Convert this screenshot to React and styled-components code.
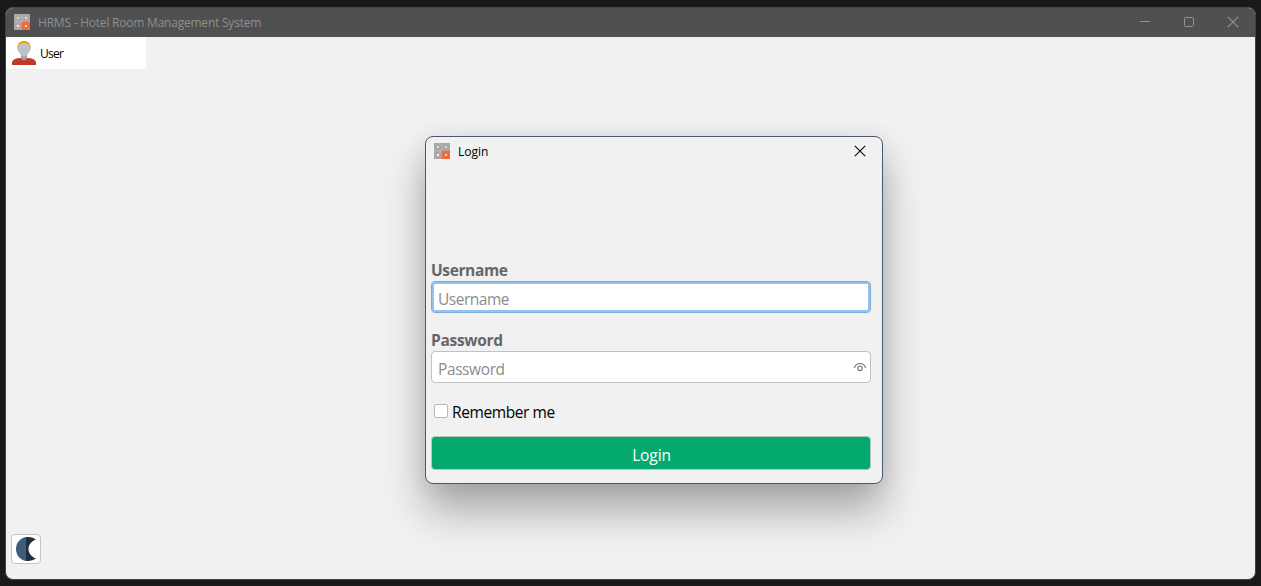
import React from "react";
import styled, { createGlobalStyle } from "styled-components";

const GlobalStyle = createGlobalStyle`
  * { box-sizing: border-box; }
  body { margin: 0; background: #191919; overflow: hidden; }
  body, input, button { font-family: "Open Sans", "Noto Sans", sans-serif; }
`;

const Desktop = styled.div`
  width: 1261px;
  height: 586px;
  padding: 7px 5px 6px;
  background: #191919;
`;

const Window = styled.main`
  position: relative;
  display: flex;
  flex-direction: column;
  width: 1251px;
  height: 573px;
  border: 1px solid #414243;
  border-top-color: #474849;
  border-radius: 8px;
  background: #f1f1f1;
  overflow: hidden;
`;

const TitleBar = styled.header`
  display: flex;
  align-items: center;
  height: 29px;
  flex: none;
  padding: 0 16px 1px 8px;
  background: #4f5051;
  color: #8f8f8f;
`;

const Caption = styled.span`
  margin-left: 8px;
  padding-top: 1px;
  font-size: 12px;
  line-height: 16px;
  letter-spacing: ${(p) => p.$spacing || "0"};
  white-space: nowrap;
`;

const WindowControls = styled.div`
  display: flex;
  gap: 32px;
  margin-left: auto;
  svg { display: block; }
`;

const UserTab = styled.div`
  display: flex;
  align-items: center;
  flex: none;
  gap: 4px;
  width: 140px;
  height: 32px;
  padding-left: 6px;
  background: #fff;
  color: #000;
  font-size: 12px;
  letter-spacing: -0.75px;
`;

const ThemeButton = styled.button`
  display: flex;
  align-items: center;
  justify-content: center;
  width: 30px;
  height: 30px;
  margin: auto 0 15px 5px;
  padding: 0;
  border: 1px solid #c4c4c4;
  border-radius: 4px;
  background: #fff;
`;

const Dialog = styled.section`
  position: absolute;
  left: 419px;
  top: 128px;
  width: 458px;
  height: 348px;
  border: 1px solid #4b5a6a;
  border-radius: 8px;
  background: #f1f1f1;
  box-shadow: 0 27px 42px rgba(0, 0, 0, 0.3), 0 2px 24px rgba(0, 0, 0, 0.08);
`;

const DialogHeader = styled.header`
  display: flex;
  align-items: center;
  height: 30px;
  padding: 0 16px 2px 8px;
  color: #000;
  > svg:last-child { margin-left: auto; }
`;

const Form = styled.div`
  display: flex;
  flex-direction: column;
  width: 440px;
  margin: 92px 0 0 5px;
`;

const FieldLabel = styled.label`
  height: 22px;
  color: #666;
  font-size: 15.5px;
  font-weight: 700;
  line-height: 22px;
  letter-spacing: ${(p) => p.$spacing};
`;

const Field = styled.div`
  display: flex;
  align-items: center;
  height: 32px;
  margin-bottom: 16px;
  padding-right: 3px;
  border: 1px solid ${(p) => (p.$focused ? "#7faad6" : "#c1c1c1")};
  border-radius: 4px;
  background: #fff;
  box-shadow: ${(p) => (p.$focused ? "inset 0 0 0 2px #96c3ee" : "none")};
`;

const TextInput = styled.input`
  flex: 1;
  min-width: 0;
  height: 28px;
  padding: 3px 0 0 6px;
  border: 0;
  outline: 0;
  background: transparent;
  font-size: 15.5px;
  letter-spacing: ${(p) => p.$spacing};
  &::placeholder { color: #8c8c8c; opacity: 1; }
`;

const Remember = styled.label`
  display: flex;
  align-items: center;
  gap: 4px;
  height: 22px;
  margin-top: 2px;
  padding-left: 3px;
  color: #000;
  font-size: 15.5px;
  line-height: 22px;
  letter-spacing: -0.4px;
`;

const Checkbox = styled.input`
  appearance: none;
  width: 14px;
  height: 14px;
  margin: 0 0 2px;
  border: 1px solid #b8b8b8;
  border-radius: 2px;
  background: #fff;
`;

const LoginButton = styled.button`
  height: 34px;
  margin-top: 13px;
  padding: 3px 0 0 1px;
  border: 1px solid #b6c9c1;
  border-radius: 4px;
  background: #04aa6d;
  color: #fff;
  font-size: 15.5px;
  line-height: 22px;
  letter-spacing: -0.1px;
`;

function AppIcon() {
  return (
    <svg width="16" height="16" viewBox="0 0 16 16">
      <path fill="#aaa7a5" d="M0 0h16v8H8v8H0z" />
      <path fill="#b9b6b4" d="M7.500 0h1v7.500h-1zM0 7.500h8v1H0z" />
      <path fill="#ee6c3b" d="M8 8h8v8H8z" />
      <g fill="#eee">
        <circle cx="4" cy="4" r="1" />
        <circle cx="12" cy="4" r="1" />
        <circle cx="4" cy="12" r="1.200" />
        <circle cx="12" cy="12" r="1" />
      </g>
    </svg>
  );
}

function UserIcon() {
  return (
    <svg width="24" height="24" viewBox="0 0 24 24">
      <path fill="#c0392b" d="M0 24v-2.200C0 19 3 17.500 7.500 17h9c4.500.5 7.500 2 7.500 4.800V24z" />
      <path fill="#95a5a6" d="M9 14h6v3.200c0 1.200-1.300 1.800-3 1.800s-3-.6-3-1.800z" />
      <path fill="#f39c12" d="M5.300 7C5.300 2.500 7.800 0 12 0s6.700 2.500 6.700 7z" />
      <path fill="#bdc3c7" d="M6.300 5C7.200 3 9 1.900 12 1.900S16.800 3 17.700 5l1 2c0 2.400-.9 3.700-1.900 4.300C16 13.800 14.200 15.500 12 15.500s-4-1.700-4.800-4.200c-1-.6-1.900-1.900-1.900-4.300z" />
    </svg>
  );
}

function CloseIcon({ color, size = 12 }) {
  return (
    <svg width={size} height={size} viewBox="0 0 12 12" fill="none" stroke={color} strokeWidth="1.2">
      <path d="m.8.8 10.400 10.400M11.200.8.8 11.200" />
    </svg>
  );
}

export default function App() {
  return (
    <>
      <GlobalStyle />
      <Desktop>
        <Window>
          <TitleBar>
            <AppIcon />
            <Caption $spacing="-0.22px">HRMS - Hotel Room Management System</Caption>
            <WindowControls>
              <svg width="12" height="12" viewBox="0 0 12 12" stroke="#929292">
                <path d="M1 5.500h10" />
              </svg>
              <svg width="12" height="12" viewBox="0 0 12 12" fill="none" stroke="#929292">
                <rect x="1.500" y="1.500" width="9" height="9" rx="1.200" />
              </svg>
              <CloseIcon color="#929292" />
            </WindowControls>
          </TitleBar>
          <UserTab>
            <UserIcon />
            <span>User</span>
          </UserTab>
          <ThemeButton aria-label="Toggle theme">
            <svg width="20" height="24" viewBox="0 0 20 24">
              <path fill="#3d5d78" d="M10 0v24C4 23 0 18 0 12S4 1 10 0z" />
              <path fill="#202f40" d="M10 .1C14-.3 17 .5 20 2.500c-5 2-7.500 5.500-7.500 9.500s2.500 7.500 7.500 9.500c-3 2-6 2.800-10 2.400z" />
            </svg>
          </ThemeButton>
          <Dialog role="dialog" aria-label="Login">
            <DialogHeader>
              <AppIcon />
              <Caption>Login</Caption>
              <CloseIcon color="#111" />
            </DialogHeader>
            <Form>
              <FieldLabel htmlFor="username" $spacing="-0.38px">Username</FieldLabel>
              <Field $focused>
                <TextInput id="username" placeholder="Username" $spacing="-0.48px" />
              </Field>
              <FieldLabel htmlFor="password" $spacing="-0.3px">Password</FieldLabel>
              <Field>
                <TextInput id="password" type="password" placeholder="Password" $spacing="-0.4px" />
                <svg width="14" height="10" viewBox="0 0 14 10" fill="none" stroke="#777" strokeWidth="1.100">
                  <path d="M1.300 6.200C2.200 3.200 4.300 1.500 7 1.500s4.800 1.700 5.700 4.700" />
                  <circle cx="7" cy="6.300" r="2.300" />
                </svg>
              </Field>
              <Remember>
                <Checkbox type="checkbox" />
                Remember me
              </Remember>
              <LoginButton>Login</LoginButton>
            </Form>
          </Dialog>
        </Window>
      </Desktop>
    </>
  );
}
